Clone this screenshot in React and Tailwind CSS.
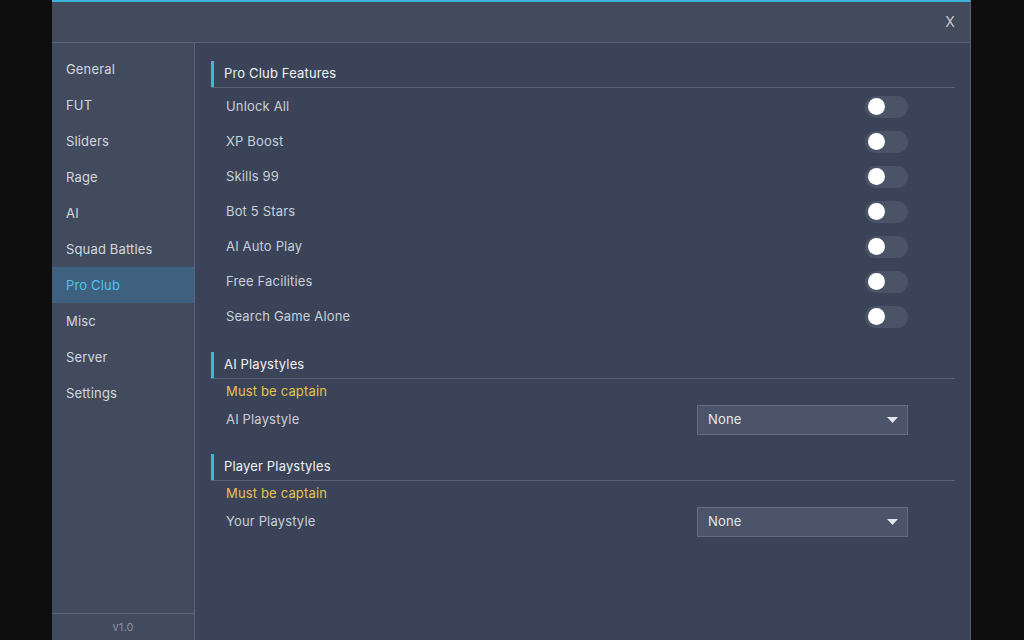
const navItems = ['General', 'FUT', 'Sliders', 'Rage', 'AI', 'Squad Battles', 'Pro Club', 'Misc', 'Server', 'Settings'];

const features = ['Unlock All', 'XP Boost', 'Skills 99', 'Bot 5 Stars', 'AI Auto Play', 'Free Facilities', 'Search Game Alone'];

const SectionHeader = ({ title }) => (
    <div className="flex items-center h-[27px] border-b border-[#5a637a]">
        <div className="w-[3px] h-[26px] bg-[#3fb6dc]" />
        <span className="ml-[10px] text-[13px] text-[#eef1f5]">{title}</span>
    </div>
);

const Toggle = () => (
    <div className="w-[43px] h-[22px] rounded-full bg-[#4b5367] flex items-center pl-[3px]">
        <div className="w-[17px] h-[17px] rounded-full bg-white" />
    </div>
);

const Select = () => (
    <div className="w-[211px] h-[30px] bg-[#4b5468] border border-[#636c80] flex items-center justify-between pl-[10px] pr-[9px]">
        <span className="text-[13px] text-[#e4e8ee]">None</span>
        <svg width="11" height="6" viewBox="0 0 11 6">
            <path d="M0 0 L11 0 L5.5 6 Z" fill="#e2e6ec" />
        </svg>
    </div>
);

const Row = ({ label, children }) => (
    <div className="flex items-center justify-between h-[35px] pl-[15px] pr-[47px]">
        <span className="text-[13px] text-[#c9cfd9]">{label}</span>
        {children}
    </div>
);

const Captain = () => (
    <div className="h-[26px] flex items-center pl-[15px] text-[13px] text-[#e8c24c]">Must be captain</div>
);

export default function App() {
    return (
        <div className="w-[1024px] h-[640px] bg-[#0e0e0f] overflow-hidden tracking-[0.01em]" style={{ fontFamily: 'Inter, "Noto Sans", sans-serif' }}>
            <div className="ml-[52px] w-[919px] h-[640px] flex flex-col bg-[#3b4358] border-t-2 border-[#3fb0d8] border-r border-r-[#566078]">
                {/* title bar */}
                <div className="h-[41px] bg-[#424a5c] border-b border-[#59627a] flex items-center justify-end pr-[15px] pb-[2px]">
                    <span className="text-[14px] text-[#c3c9d3]">X</span>
                </div>

                <div className="flex flex-1 min-h-0">
                    {/* sidebar */}
                    <div className="w-[143px] bg-[#424a5d] border-r border-[#59627a] flex flex-col">
                        <div className="flex-1 pt-[8px]">
                            {navItems.map((item) => (
                                <div
                                    key={item}
                                    className={`h-[36px] flex items-center pl-[14px] pt-[2px] text-[13px] ${item === 'Pro Club'
                                            ? 'bg-[#3e6180] text-[#4ec4ec]'
                                            : 'text-[#d2d7df]'
                                        }`}
                                >
                                    {item}
                                </div>
                            ))}
                        </div>
                        <div className="h-[27px] border-t border-[#59627a] flex items-center justify-center text-[11px] text-[#8a91a1]">
                            v1.0
                        </div>
                    </div>

                    {/* content */}
                    <div className="flex-1 pl-[16px] pr-[15px] pt-[18px]">
                        <SectionHeader title="Pro Club Features" />
                        <div className="pt-[1px]">
                            {features.map((f) => (
                                <Row key={f} label={f}>
                                    <Toggle />
                                </Row>
                            ))}
                        </div>

                        <div className="mt-[18px]">
                            <SectionHeader title="AI Playstyles" />
                            <Captain />
                            <div className="flex items-center justify-between h-[30px] pl-[15px] pr-[47px]">
                                <span className="text-[13px] text-[#c9cfd9]">AI Playstyle</span>
                                <Select />
                            </div>
                        </div>

                        <div className="mt-[19px]">
                            <SectionHeader title="Player Playstyles" />
                            <Captain />
                            <div className="flex items-center justify-between h-[30px] pl-[15px] pr-[47px]">
                                <span className="text-[13px] text-[#c9cfd9]">Your Playstyle</span>
                                <Select />
                            </div>
                        </div>
                    </div>
                </div>
            </div>
        </div>
    );
}
